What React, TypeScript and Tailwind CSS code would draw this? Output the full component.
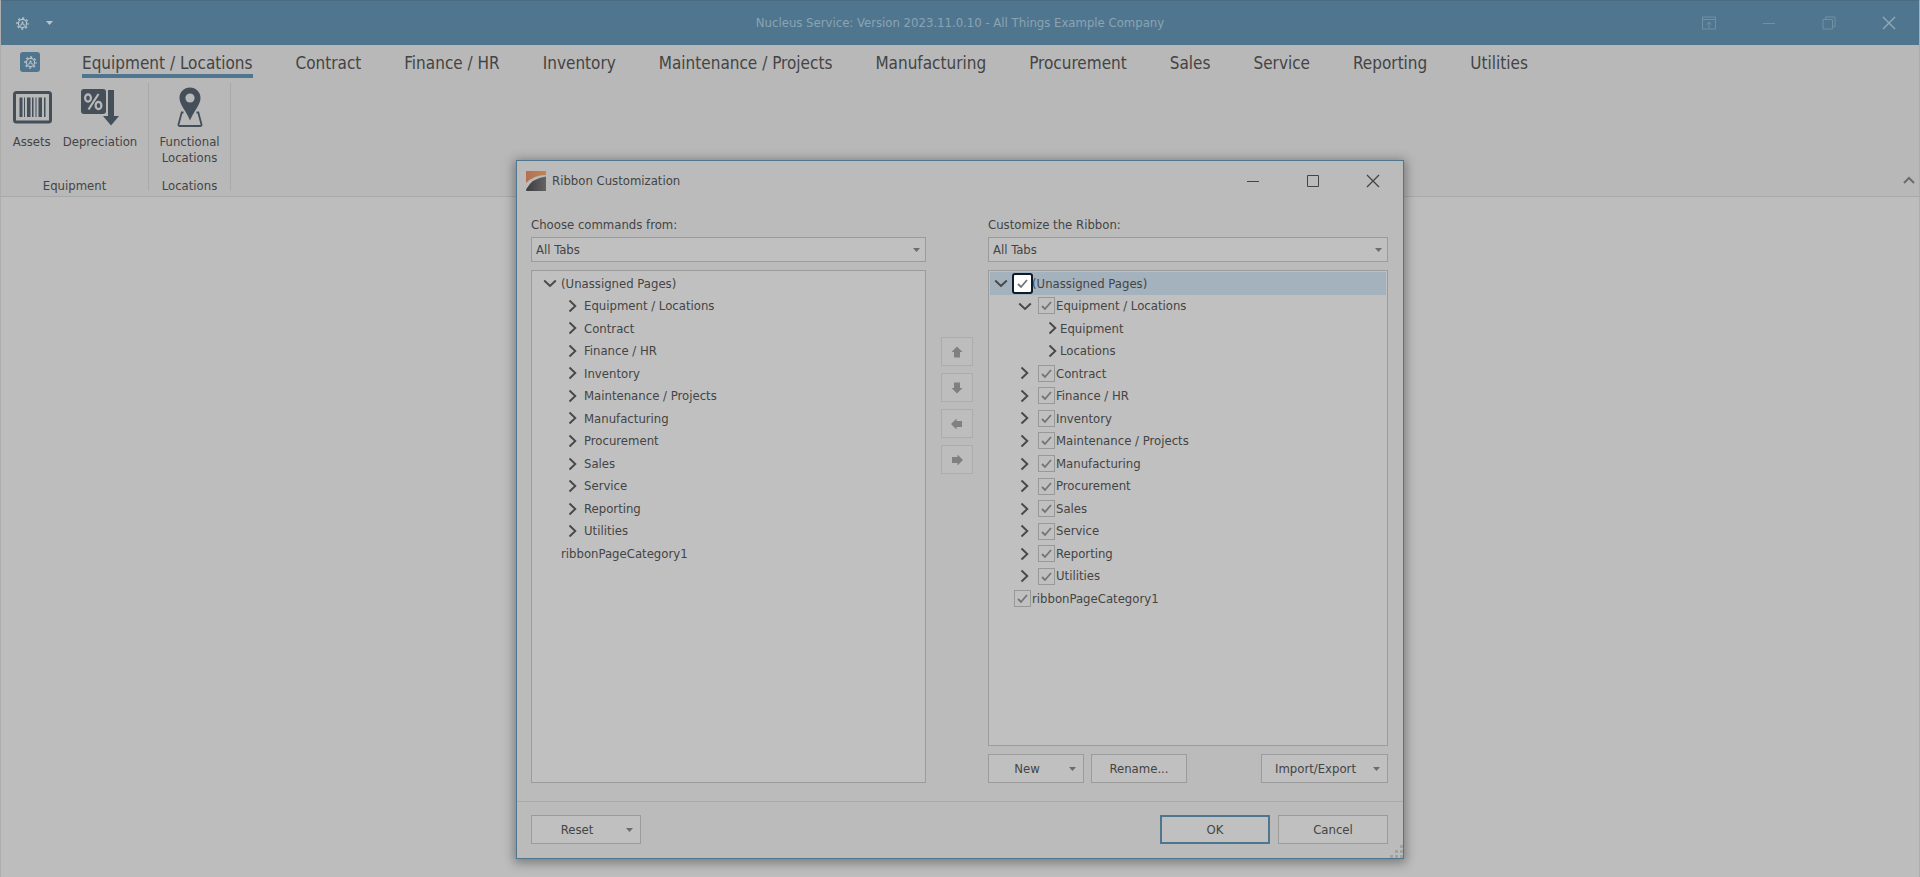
import { useState, type ReactNode } from "react";
import clsx from "clsx";

const tabs = [
  "Equipment / Locations",
  "Contract",
  "Finance / HR",
  "Inventory",
  "Maintenance / Projects",
  "Manufacturing",
  "Procurement",
  "Sales",
  "Service",
  "Reporting",
  "Utilities",
];

type Node = {
  label: string;
  level: number;
  open?: boolean;
  leaf?: boolean;
  check?: boolean;
};

const commandNodes: Node[] = [
  { label: "(Unassigned Pages)", level: 0, open: true },
  ...tabs.map((label) => ({ label, level: 1 })),
  { label: "ribbonPageCategory1", level: 0, leaf: true },
];

const ribbonNodes: Node[] = [
  { label: "(Unassigned Pages)", level: 0, open: true, check: true },
  { label: "Equipment / Locations", level: 1, open: true, check: true },
  { label: "Equipment", level: 2 },
  { label: "Locations", level: 2 },
  ...tabs.slice(1).map((label) => ({ label, level: 1, check: true })),
  { label: "ribbonPageCategory1", level: 0, leaf: true, check: true },
];

const indents = ["pl-1", "pl-7", "pl-14"];

function Gear() {
  return (
    <svg className="h-[13px] w-[13px]" viewBox="0 0 14 14" fill="none" stroke="currentColor">
      <circle cx="7" cy="7" r="4.4" strokeWidth="1.3" />
      <circle cx="7" cy="7" r="5.9" strokeWidth="1.5" strokeDasharray="2.3 2.33" strokeDashoffset="1.1" />
      <circle cx="7" cy="5.9" r="1.1" fill="currentColor" stroke="none" />
      <path d="M5.1 9.4c0-3 3.8-3 3.8 0" strokeWidth="1.1" />
    </svg>
  );
}

function Caret({ className }: { className?: string }) {
  return (
    <svg className={clsx("h-1 w-[7px] shrink-0", className)} viewBox="0 0 7 4" fill="currentColor">
      <path d="M0 0h7L3.5 4z" />
    </svg>
  );
}

function Chevron({ open }: { open?: boolean }) {
  return (
    <svg className="h-3.5 w-3.5" viewBox="0 0 14 14" fill="none" stroke="#484848" strokeWidth="1.9">
      {open ? <path d="M1.2 4.5 7 10l5.8-5.5" /> : <path d="M3.5 1.5 9.3 7l-5.8 5.5" />}
    </svg>
  );
}

function TitleButton({ label, children }: { label: string; children: ReactNode }) {
  return (
    <button type="button" aria-label={label} className="flex h-full w-[60px] items-center justify-center">
      <svg className="h-3.5 w-3.5" viewBox="0 0 14 14" fill="none" stroke="currentColor">
        {children}
      </svg>
    </button>
  );
}

function TitleBar() {
  return (
    <header className="relative flex h-[45px] items-center border-t border-[#4b6c80] bg-[#50768f] text-[#b9c4cc]">
      <button type="button" aria-label="Settings" className="ml-[15px]">
        <Gear />
      </button>
      <button type="button" aria-label="Customize quick access" className="ml-[17px]">
        <Caret />
      </button>
      <h1 className="pointer-events-none absolute inset-x-0 text-center text-[13px] text-[#8ba3b3]">
        Nucleus Service: Version 2023.11.0.10 - All Things Example Company
      </h1>
      <div className="ml-auto flex h-full text-[#7090a4]">
        <TitleButton label="Ribbon display options">
          <path d="M.5 1h13v12H.5zM.5 3.5h13M7 12V6M4.5 8.5 7 6l2.5 2.5" />
        </TitleButton>
        <TitleButton label="Minimize">
          <path d="M1 7.5h12" />
        </TitleButton>
        <TitleButton label="Restore">
          <path d="M1 3.5h9.5V13H1zM3.5 3.5V1H13v9.5h-2.5" />
        </TitleButton>
        <TitleButton label="Close">
          <path d="m1 1 12 12M13 1 1 13" stroke="#94a9b7" strokeWidth="1.4" />
        </TitleButton>
      </div>
    </header>
  );
}

function AssetsIcon() {
  return (
    <svg className="h-10 w-10" viewBox="0 0 40 40" fill="#454f5a">
      <rect x="2.5" y="5.5" width="36" height="29.5" rx="2" fill="none" stroke="#454f5a" strokeWidth="3" />
      <path d="M7.500 10.500h3v19.500h-3zM12 10.500h1V30h-1zM15 10.500h3.500V30H15zM20 10.500h1.500V30H20zM23.500 10.500h1V30h-1zM26.500 10.500h3.500V30h-3.500zM32 10.500h1.500V30H32z" />
    </svg>
  );
}

function DepreciationIcon() {
  return (
    <svg className="h-10 w-10" viewBox="0 0 40 40" fill="#454f5a">
      <rect x="1" y="2" width="25" height="25" rx="3" />
      <path d="M28 3h6v26h5l-8 9.5-8-9.500h5z" />
      <g fill="none" stroke="#b8b8b8" strokeWidth="2.2">
        <ellipse cx="8" cy="11" rx="2.9" ry="3.6" />
        <ellipse cx="18.500" cy="18.500" rx="2.9" ry="3.6" />
        <path d="M18.500 7 8.500 22.500" />
      </g>
    </svg>
  );
}

function LocationIcon() {
  return (
    <svg className="h-10 w-10" viewBox="0 0 40 40">
      <path
        d="M13.500 25.500h-1.800L8.500 37.500q-.3 1.500 1 1.500h21q1.300 0 1-1.500L28.300 25.500h-1.800"
        fill="none"
        stroke="#454f5a"
        strokeWidth="1.8"
      />
      <path
        d="M20 .5c-5.800 0-10.500 4.600-10.500 10.400C9.500 18 17 25 20 33.500 23 25 30.500 18 30.500 10.900 30.500 5.100 25.800.5 20 .5z"
        fill="#454f5a"
      />
      <circle cx="20" cy="11" r="4.600" fill="#b8b8b8" />
    </svg>
  );
}

function RibbonButton({ icon, children }: { icon: ReactNode; children: ReactNode }) {
  return (
    <button type="button" className="flex flex-col items-center gap-[7px] text-[13px] leading-4">
      {icon}
      <span>{children}</span>
    </button>
  );
}

function RibbonGroup({ title, className, children }: { title: string; className: string; children: ReactNode }) {
  return (
    <section className={clsx("flex h-[108px] flex-col border-r border-[#a9a9a9]", className)}>
      <div className="flex flex-1 justify-center gap-[11px] pt-1">{children}</div>
      <h2 className="text-center text-[13px] leading-[10px]">{title}</h2>
    </section>
  );
}

function Ribbon() {
  const [active, setActive] = useState(tabs[0]);

  return (
    <div className="border-b border-[#a9a9a9] bg-[#b8b8b8]">
      <nav className="flex h-[33px] items-start pl-[19px]">
        <button
          type="button"
          aria-label="Application menu"
          className="mt-[7px] mr-[42px] flex h-5 w-5 items-center justify-center rounded-[3px] bg-[#50768f] text-[#b8c3ca]"
        >
          <Gear />
        </button>
        <div className="flex h-full gap-[43px]">
          {tabs.map((tab) => (
            <button
              key={tab}
              type="button"
              onClick={() => setActive(tab)}
              className={clsx(
                "h-full border-b-4 pt-[6px] text-[17px] leading-5 whitespace-nowrap",
                tab === active ? "border-[#50768f]" : "border-transparent"
              )}
            >
              {tab}
            </button>
          ))}
        </div>
      </nav>

      <div className="flex h-[118px] items-start pt-[5px]">
        <RibbonGroup title="Equipment" className="w-[148px]">
          <RibbonButton icon={<AssetsIcon />}>Assets</RibbonButton>
          <RibbonButton icon={<DepreciationIcon />}>Depreciation</RibbonButton>
        </RibbonGroup>
        <RibbonGroup title="Locations" className="w-[82px]">
          <RibbonButton icon={<LocationIcon />}>
            Functional
            <br />
            Locations
          </RibbonButton>
        </RibbonGroup>
        <button type="button" aria-label="Collapse the ribbon" className="mt-auto mr-1 mb-3 ml-auto">
          <svg className="h-2 w-3" viewBox="0 0 12 8" fill="none" stroke="#6c6c6c" strokeWidth="2">
            <path d="m1 7 5-5 5 5" />
          </svg>
        </button>
      </div>
    </div>
  );
}

function Picker({ id, label }: { id: string; label: string }) {
  return (
    <>
      <label htmlFor={id} className="mb-1 leading-4">
        {label}
      </label>
      <div className="mb-2 grid items-center">
        <select
          id={id}
          className="col-start-1 row-start-1 h-[25px] w-full appearance-none border border-[#9b9b9b] bg-[#c0c0c0] px-1 outline-none"
        >
          <option>All Tabs</option>
        </select>
        <Caret className="pointer-events-none col-start-1 row-start-1 mr-[6px] justify-self-end text-[#6c6c6c]" />
      </div>
    </>
  );
}

function CheckBox({ id, focused }: { id: string; focused?: boolean }) {
  return (
    <span
      className={clsx(
        "grid h-[17px] w-[17px] shrink-0 place-items-center",
        focused && "rounded-[1px] outline-2 outline-[#0b1c2f]"
      )}
    >
      <input
        id={id}
        type="checkbox"
        defaultChecked
        className={clsx(
          "peer col-start-1 row-start-1 h-full w-full appearance-none border outline-none",
          focused ? "border-white bg-white" : "border-[#989898]"
        )}
      />
      <svg
        className="pointer-events-none invisible col-start-1 row-start-1 h-[11px] w-[11px] peer-checked:visible"
        viewBox="0 0 11 11"
        fill="none"
        stroke="#747474"
        strokeWidth="1.8"
      >
        <path d="m1 6 3 3 6-7" />
      </svg>
    </span>
  );
}

function TreeRow({ node, index }: { node: Node; index: number }) {
  const id = `ribbon-node-${index}`;
  const selected = index === 0;

  return (
    <li className={clsx("flex items-center", indents[node.level], selected && "bg-[#a4b2bd]")}>
      <button type="button" aria-label={`Toggle ${node.label}`} className={clsx("shrink-0", node.leaf && "invisible")}>
        <Chevron open={node.open} />
      </button>
      {node.check ? (
        <div className="flex items-center gap-px pl-[6px]">
          <CheckBox id={id} focused={selected} />
          <label htmlFor={id}>{node.label}</label>
        </div>
      ) : (
        <span>{node.label}</span>
      )}
    </li>
  );
}

function PushButton({
  children,
  caret,
  primary,
  className,
}: {
  children: ReactNode;
  caret?: boolean;
  primary?: boolean;
  className: string;
}) {
  return (
    <button
      type="button"
      className={clsx(
        "flex h-[29px] items-center bg-[#c0c0c0]",
        primary ? "border-2 border-[#50768f]" : "border border-[#9b9b9b]",
        className
      )}
    >
      <span className="flex-1 text-center">{children}</span>
      {caret && <Caret className="mr-[7px] ml-1 text-[#6c6c6c]" />}
    </button>
  );
}

const moves = [
  { label: "Move up", d: "M7 1.5 12.5 7H10v5.500H4V7H1.500z" },
  { label: "Move down", d: "M7 12.500 12.500 7H10V1.500H4V7H1.500z" },
  { label: "Remove", d: "M1 7l5.500-5.500V4H12v6H6.500v2.500z" },
  { label: "Add", d: "M13 7 7.500 1.500V4H2v6h5.500v2.500z" },
];

function RibbonDialog() {
  return (
    <div
      role="dialog"
      aria-label="Ribbon Customization"
      className="relative flex w-[888px] flex-col border border-[#50768f] bg-[#bbbbbb] text-[13px] shadow-[0_2px_10px_2px_rgba(0,0,0,0.35)]"
    >
      <div className="flex h-[39px] items-center">
        <svg className="ml-[9px] h-5 w-5" viewBox="0 0 20 20">
          <defs>
            <linearGradient id="warm">
              <stop stopColor="#b36e55" />
              <stop offset="1" stopColor="#c08550" />
            </linearGradient>
            <linearGradient id="dark">
              <stop stopColor="#3c3c3c" />
              <stop offset="1" stopColor="#646464" />
            </linearGradient>
          </defs>
          <path d="M0 0h20v4Q8 4 0 12z" fill="url(#warm)" />
          <path d="M20 5.500V20H1q-1 0-1-1.500Q6 7 20 5.500z" fill="url(#dark)" />
        </svg>
        <h2 className="ml-[6px]">Ribbon Customization</h2>
        <div className="ml-auto flex h-full text-[#444444]">
          <TitleButton label="Minimize dialog">
            <path d="M1 7.500h12" />
          </TitleButton>
          <TitleButton label="Maximize dialog">
            <path d="M1.500 1.500h11v11h-11z" />
          </TitleButton>
          <TitleButton label="Close dialog">
            <path d="m1 1 12 12M13 1 1 13" strokeWidth="1.3" />
          </TitleButton>
        </div>
      </div>

      <div className="flex pt-[17px] pr-[15px] pb-[18px] pl-[14px]">
        <div className="flex flex-1 flex-col">
          <Picker id="commands-from" label="Choose commands from:" />
          <div className="flex-1 border border-[#9b9b9b] bg-[#c0c0c0] p-px">
            <ul className="grid h-[293px] auto-rows-fr">
              {commandNodes.map((node) => (
                <li key={node.label} className={clsx("flex items-center gap-1", node.level ? "pl-[33px]" : "pl-[10px]")}>
                  <button
                    type="button"
                    aria-label={`Toggle ${node.label}`}
                    className={clsx("shrink-0", node.leaf && "invisible")}
                  >
                    <Chevron open={node.open} />
                  </button>
                  <span>{node.label}</span>
                </li>
              ))}
            </ul>
          </div>
        </div>

        <div className="flex flex-col gap-[7px] px-[15px] pt-[120px]">
          {moves.map((move) => (
            <button
              key={move.label}
              type="button"
              aria-label={move.label}
              className="flex h-[29px] w-8 items-center justify-center border border-[#acacac] bg-[#bdbdbd]"
            >
              <svg className="h-3.5 w-3.5" viewBox="0 0 14 14" fill="#808080">
                <path d={move.d} />
              </svg>
            </button>
          ))}
        </div>

        <div className="flex w-[400px] flex-col">
          <Picker id="customize-ribbon" label="Customize the Ribbon:" />
          <div className="h-[476px] border border-[#9b9b9b] bg-[#c0c0c0] p-px">
            <ul className="grid h-[338px] auto-rows-fr">
              {ribbonNodes.map((node, i) => (
                <TreeRow key={`${node.label}-${i}`} node={node} index={i} />
              ))}
            </ul>
          </div>
          <div className="mt-2 flex gap-[7px]">
            <PushButton caret className="w-24">New</PushButton>
            <PushButton className="w-24">Rename...</PushButton>
            <PushButton caret className="ml-auto w-[127px]">Import/Export</PushButton>
          </div>
        </div>
      </div>

      <div className="flex gap-2 border-t border-[#a9a9a9] pt-[13px] pr-[15px] pb-[14px] pl-[14px]">
        <PushButton caret className="mr-auto w-[110px]">Reset</PushButton>
        <PushButton primary className="w-[110px]">OK</PushButton>
        <PushButton className="w-[110px]">Cancel</PushButton>
      </div>

      {/* resize grip */}
      <svg className="absolute right-0 bottom-0 h-[13px] w-[13px]" viewBox="0 0 13 13" fill="#a2a2a2">
        <path d="M10 0h3v3h-3zM5 5h3v3H5zM10 5h3v3h-3zM0 10h3v3H0zM5 10h3v3H5zM10 10h3v3h-3z" />
      </svg>
    </div>
  );
}

export default function App() {
  return (
    <div className="relative min-h-screen border-x border-[#adadad] bg-[#bdbdbd] font-['DejaVu_Sans_Condensed','DejaVu_Sans',sans-serif] text-[#444444]">
      <TitleBar />
      <Ribbon />
      <div className="absolute inset-x-0 top-40 flex justify-center">
        <RibbonDialog />
      </div>
    </div>
  );
}
